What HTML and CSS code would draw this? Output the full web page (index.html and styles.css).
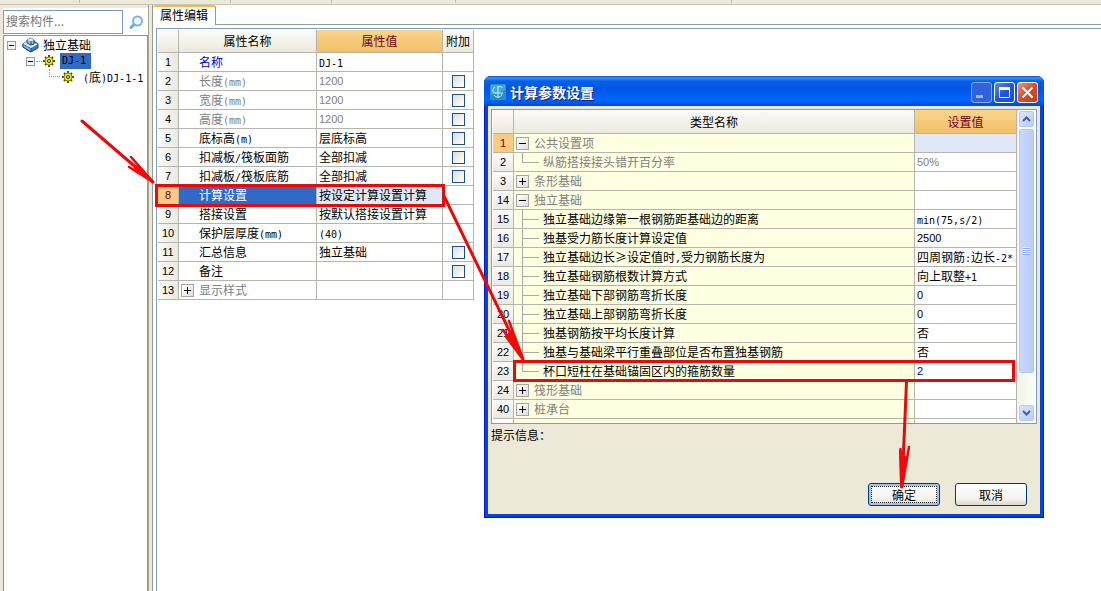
FILE: index.html
```html
<!DOCTYPE html>
<html lang="zh-CN">
<head>
<meta charset="utf-8">
<meta name="viewport" content="width=device-width, initial-scale=1">
<title>属性编辑</title>
<link rel="stylesheet" href="styles.css">
</head>
<body>
<div class="toolbar"><i></i><i></i><i></i><i></i><i></i></div>
<div class="workspace">
  <aside class="sidebar">
    <form class="search">
      <input type="text" class="search-box" placeholder="搜索构件..." aria-label="搜索构件">
      <button type="button" class="search-btn" aria-label="搜索">
        <svg width="16" height="16" viewBox="0 0 16 16"><circle cx="9.500" cy="6" r="4.500" fill="#eef7fe" stroke="#7ab6ea" stroke-width="2"/><path d="M6 9.500L3 12.500" stroke="#6aa8e4" stroke-width="3" stroke-linecap="round"/></svg>
      </button>
    </form>
    <div class="tree">
      <div class="node">
        <button type="button" class="twisty" aria-label="折叠"></button>
        <svg class="root-icon" width="17" height="16" viewBox="0 0 17 16"><path d="M1 7l3-2 4 2 4-3 4 3v4l-7 4-8-5z" fill="#3f7cb8" stroke="#1d4474"/><path d="M1 7l8 4v4l-8-5z" fill="#79b4e0" stroke="#1d4474"/><path d="M1 7l3-2 8 1 4 1-7 4z" fill="#d8effb"/><path d="M5 3l4-2 3 2v4L9 8 5 6z" fill="#8fc4ea" stroke="#1d4474"/><path d="M5 3l4-2 3 2-3 1z" fill="#e8f6fd"/><path d="M9 4v4" stroke="#1d4474"/></svg>
        <span>独立基础</span>
      </div>
      <div class="node level1">
        <button type="button" class="twisty" aria-label="折叠"></button>
        <i class="dots"></i>
        <svg class="gear" width="12" height="12" viewBox="0 0 12 12"><path d="M6 0v12M0 6h12M2 2l8 8M10 2l-8 8" stroke="#4d4800" stroke-width="2"/><circle cx="6" cy="6" r="4" fill="#f6e926" stroke="#8d8200"/><circle cx="6" cy="6" r="1.500" fill="#fff" stroke="#222"/></svg>
        <span class="selected a">DJ-1</span>
      </div>
      <div class="node level2">
        <i class="elbow"></i>
        <svg class="gear" width="12" height="12" viewBox="0 0 12 12"><path d="M6 0v12M0 6h12M2 2l8 8M10 2l-8 8" stroke="#4d4800" stroke-width="2"/><circle cx="6" cy="6" r="4" fill="#f6e926" stroke="#8d8200"/><circle cx="6" cy="6" r="1.500" fill="#fff" stroke="#222"/></svg>
        <span class="leaf"><span class="a">(</span>底<span class="a">)DJ-1-1</span></span>
      </div>
    </div>
  </aside>
  <div class="splitter"></div>
  <main class="editor">
    <div class="tabs"><button type="button" class="tab">属性编辑</button><div class="tab-rest"></div></div>
    <div class="sheet">
      <table class="grid props">
        <colgroup><col class="c-num"><col class="c-name"><col class="c-value"><col class="c-extra"></colgroup>
        <thead><tr><th></th><th>属性名称</th><th class="hot">属性值</th><th>附加</th></tr></thead>
        <tbody>
          <tr><th>1</th><td class="blue">名称</td><td><span class="a">DJ-1</span></td><td></td></tr>
          <tr class="dim"><th>2</th><td>长度<span class="a">(mm)</span></td><td class="n">1200</td><td><input type="checkbox" aria-label="附加 长度"></td></tr>
          <tr class="dim"><th>3</th><td>宽度<span class="a">(mm)</span></td><td class="n">1200</td><td><input type="checkbox" aria-label="附加 宽度"></td></tr>
          <tr class="dim"><th>4</th><td>高度<span class="a">(mm)</span></td><td class="n">1200</td><td><input type="checkbox" aria-label="附加 高度"></td></tr>
          <tr><th>5</th><td>底标高<span class="a">(m)</span></td><td>层底标高</td><td><input type="checkbox" aria-label="附加 底标高"></td></tr>
          <tr><th>6</th><td>扣减板<span class="a">/</span>筏板面筋</td><td>全部扣减</td><td><input type="checkbox" aria-label="附加 面筋"></td></tr>
          <tr><th>7</th><td>扣减板<span class="a">/</span>筏板底筋</td><td>全部扣减</td><td><input type="checkbox" aria-label="附加 底筋"></td></tr>
          <tr class="current"><th>8</th><td>计算设置</td><td>按设定计算设置计算</td><td></td></tr>
          <tr><th>9</th><td>搭接设置</td><td>按默认搭接设置计算</td><td></td></tr>
          <tr><th>10</th><td>保护层厚度<span class="a">(mm)</span></td><td><span class="a">(40)</span></td><td></td></tr>
          <tr><th>11</th><td>汇总信息</td><td>独立基础</td><td><input type="checkbox" aria-label="附加 汇总信息"></td></tr>
          <tr><th>12</th><td>备注</td><td></td><td><input type="checkbox" aria-label="附加 备注"></td></tr>
          <tr class="dim"><th>13</th><td class="group"><div class="line"><button type="button" class="expander plus" aria-label="展开"></button>显示样式</div></td><td></td><td></td></tr>
        </tbody>
      </table>
    </div>
  </main>
</div>

<section class="dialog" role="dialog" aria-labelledby="dialog-title">
  <header class="titlebar">
    <svg width="16" height="16" viewBox="0 0 16 16"><rect width="16" height="16" rx="1" fill="#2a8fc0"/><path d="M1 1h14v5L1 11z" fill="#46a8cf"/><path d="M8 2v12M5 3c-3 2-3 5 0 6h8M4 11c2 3 7 3 8-1M8 3c3-1 4 0 4 1" fill="none" stroke="#c9f1f7"/></svg>
    <h1 id="dialog-title">计算参数设置</h1>
    <button type="button" class="win min" aria-label="最小化"><svg width="19" height="19" viewBox="0 0 19 19"><path d="M4 13.500h7" stroke="#9fb6f2" stroke-width="3"/></svg></button>
    <button type="button" class="win" aria-label="最大化"><svg width="19" height="19" viewBox="0 0 19 19"><path d="M4 5.500h11" stroke="#fff" stroke-width="3"/><path d="M4.500 5v9.500h10V5" fill="none" stroke="#fff"/></svg></button>
    <button type="button" class="win close" aria-label="关闭"><svg width="19" height="19" viewBox="0 0 19 19"><path d="M4.500 4.500l10 10M14.500 4.500l-10 10" stroke="#fff" stroke-width="2"/></svg></button>
  </header>
  <div class="dialog-body">
    <div class="frame">
      <div class="table-area">
        <table class="grid params">
          <colgroup><col class="c-num"><col><col class="c-set"></colgroup>
          <thead><tr><th></th><th>类型名称</th><th class="hot">设置值</th></tr></thead>
          <tbody>
            <tr class="dim active"><th>1</th><td><div class="line"><button type="button" class="expander" aria-label="折叠"></button>公共设置项</div></td><td></td></tr>
            <tr class="dim"><th>2</th><td><div class="line"><i class="branch last"></i>纵筋搭接接头错开百分率</div></td><td class="n">50%</td></tr>
            <tr class="dim"><th>3</th><td><div class="line"><button type="button" class="expander plus" aria-label="展开"></button>条形基础</div></td><td></td></tr>
            <tr class="dim"><th>14</th><td><div class="line"><button type="button" class="expander" aria-label="折叠"></button>独立基础</div></td><td></td></tr>
            <tr><th>15</th><td><div class="line"><i class="branch"></i>独立基础边缘第一根钢筋距基础边的距离</div></td><td><span class="a">min(75,s/2)</span></td></tr>
            <tr><th>16</th><td><div class="line"><i class="branch"></i>独基受力筋长度计算设定值</div></td><td class="n">2500</td></tr>
            <tr><th>17</th><td><div class="line"><i class="branch"></i><span>独立基础边长<span class="ge">≥</span>设定值时<span class="a">,</span>受力钢筋长度为</span></div></td><td>四周钢筋<span class="a">:</span>边长<span class="a">-2*</span></td></tr>
            <tr><th>18</th><td><div class="line"><i class="branch"></i>独立基础钢筋根数计算方式</div></td><td>向上取整<span class="a">+1</span></td></tr>
            <tr><th>19</th><td><div class="line"><i class="branch"></i>独立基础下部钢筋弯折长度</div></td><td class="n">0</td></tr>
            <tr><th>20</th><td><div class="line"><i class="branch"></i>独立基础上部钢筋弯折长度</div></td><td class="n">0</td></tr>
            <tr><th>21</th><td><div class="line"><i class="branch"></i>独基钢筋按平均长度计算</div></td><td>否</td></tr>
            <tr><th>22</th><td><div class="line"><i class="branch"></i>独基与基础梁平行重叠部位是否布置独基钢筋</div></td><td>否</td></tr>
            <tr><th>23</th><td><div class="line"><i class="branch last"></i>杯口短柱在基础锚固区内的箍筋数量</div></td><td class="n navy">2</td></tr>
            <tr class="dim"><th>24</th><td><div class="line"><button type="button" class="expander plus" aria-label="展开"></button>筏形基础</div></td><td></td></tr>
            <tr class="dim"><th>40</th><td><div class="line"><button type="button" class="expander plus" aria-label="展开"></button>桩承台</div></td><td></td></tr>
          </tbody>
        </table>
        <div class="next-row"><i></i><i></i><i></i></div>
      </div>
      <div class="scrollbar">
        <button type="button" class="arrow" aria-label="向上滚动"><svg width="9" height="6" viewBox="0 0 9 6"><path d="M1 5l3.500-3.500L8 5" fill="none" stroke="#4d6185" stroke-width="2"/></svg></button>
        <div class="thumb"><i></i></div>
        <button type="button" class="arrow" aria-label="向下滚动"><svg width="9" height="6" viewBox="0 0 9 6"><path d="M1 1l3.500 3.500L8 1" fill="none" stroke="#4d6185" stroke-width="2"/></svg></button>
      </div>
    </div>
    <p class="hint">提示信息：</p>
    <div class="actions">
      <button type="button" class="btn default"><span>确定</span></button>
      <button type="button" class="btn"><span>取消</span></button>
    </div>
  </div>
</section>

<svg class="marks" width="1101" height="591" viewBox="0 0 1101 591" aria-hidden="true">
  <g fill="none" stroke="#e60a0a" stroke-width="3" stroke-linecap="round">
    <rect x="156.500" y="185.500" width="287" height="20"/>
    <rect x="514.500" y="361.500" width="499" height="19"/>
    <path d="M82 121L153 182M444 196L523 359M906.500 382L902 487"/>
    <path d="M131 157L153 182L129 167M509 321L523 359L503 330M900.500 449L902 487L909 447" stroke-width="2.500"/>
  </g>
  <path d="M138 165L153 182L134 170zM512 330L523 360L506 337zM900 452L901 488L906 458z" fill="#f40808" stroke="#f40808" stroke-width="2"/>
</svg>
</body>
</html>
```

FILE: styles.css
```css
* { box-sizing: border-box; }

body {
  margin: 0;
  min-height: 100vh;
  display: flex;
  flex-direction: column;
  background: #fff;
  color: #000;
  font: 12px/16px "Noto Sans CJK SC", sans-serif;
}

button, input { font: inherit; color: inherit; padding: 0; margin: 0; }
svg { display: block; flex: none; }

.a { font: 10px/12px "DejaVu Sans Mono", monospace; }
.n { font-family: "Liberation Sans", sans-serif; font-size: 11px; }

.toolbar {
  display: grid;
  grid-template-columns: 80px 151px 101px 124px 276px;
  height: 5px;
  flex: none;
  background: #ece9d8;
  border-bottom: 1px solid #c9c5b4;
}
.toolbar i { border-right: 1px solid #c0bba8; height: 3px; }

.workspace { flex: 1; display: flex; }

.sidebar {
  width: 148px;
  flex: none;
  display: flex;
  flex-direction: column;
  padding-left: 3px;
  background: #ece9d8;
}
.search {
  display: flex;
  height: 30px;
  padding-top: 5px;
  background: linear-gradient(#ece9d8 3px, #fdfdfc 3px);
}
.search-box {
  flex: 1;
  min-width: 0;
  height: 24px;
  padding: 0 2px 4px;
  border: 1px solid #7c9bbd;
  outline: 0;
  background: #fff;
}
.search-box::placeholder { color: #777; opacity: 1; }
.search-btn {
  width: 25px;
  display: flex;
  align-items: center;
  justify-content: center;
  border: 0;
  background: transparent;
}
.tree {
  flex: 1;
  padding: 1px 0 0 3px;
  background: #fff;
  border: solid #8797a8;
  border-width: 1px 1px 0;
}
.node { display: flex; align-items: center; height: 16px; white-space: nowrap; }
.twisty {
  width: 9px;
  height: 9px;
  flex: none;
  border: 1px solid #8b9db5;
  background: linear-gradient(#000, #000) center / 5px 1px no-repeat, #f4f3ee;
}
.root-icon { margin: 0 4px 0 6px; }
.level1 { padding-left: 19px; }
.dots { width: 6px; margin: 0 1px; border-top: 1px dotted #999; }
.gear { margin-right: 5px; }
.selected.a { width: 31px; line-height: 16px; padding-left: 2px; background: #316ac5; }
.level2 { padding-left: 42px; }
.elbow {
  width: 11px;
  height: 8px;
  margin-right: 2px;
  align-self: flex-start;
  border: dotted #999;
  border-width: 0 0 1px 1px;
}
.leaf { padding-left: 4px; }

.splitter {
  width: 5px;
  flex: none;
  background: #e9ead9;
  border-left: 1px solid #a8a38f;
  border-right: 1px solid #919b9c;
}

.editor { flex: 1; min-width: 0; display: flex; flex-direction: column; }
.tabs { display: flex; height: 20px; }
.tab {
  width: 63px;
  padding-bottom: 3px;
  border: solid #919b9c;
  border-width: 2px 1px 0 0;
  border-top-color: #f3b944;
  border-radius: 3px 3px 0 0;
  background: #fff;
  line-height: 15px;
}
.tab-rest { flex: 1; border-bottom: 1px solid #919b9c; }
.sheet {
  flex: 1;
  margin: 3px 0 0 3px;
  padding: 1px 0 0 1px;
  border: solid #7f9db9;
  border-width: 1px 0 0 1px;
}

.grid { border-collapse: separate; border-spacing: 0; table-layout: fixed; }
.grid th, .grid td {
  padding: 0;
  height: 19px;
  line-height: 16px;
  border: solid #b5b5ae;
  border-width: 0 1px 1px 0;
  font-weight: 400;
  text-align: left;
  white-space: nowrap;
  overflow: hidden;
}
.grid thead th {
  height: 23px;
  text-align: center;
  background: linear-gradient(#fbfbf9, #ebe9dd);
}
.grid thead .hot { background: linear-gradient(#fad48c, #f2c06a); color: #700020; }
.grid tbody th {
  font-family: "Liberation Sans", sans-serif;
  font-size: 11px;
  text-align: center;
  background: linear-gradient(90deg, #fbfbf9, #ebe9dd);
}
.grid .dim td { color: #808080; }
.c-num { width: 21px; }
.c-name { width: 138px; }
.c-value { width: 126px; }
.c-extra { width: 31px; }
.c-set { width: 102px; }

.props { width: 316px; }
.props td:nth-child(2) { padding-left: 20px; }
.props td.group { padding-left: 2px; }
.props td:nth-child(3) { padding-left: 2px; }
.props .blue { color: #0000d8; }
.props .current th { background: #fccb83; color: #700020; }
.props .current td:nth-child(2) { background: #316ac5; color: #fff; }
.props .current td:nth-child(3) { background: #dfe8f6; }
.props input {
  display: block;
  width: 13px;
  height: 13px;
  margin: 1px auto 0;
  appearance: none;
  border: 1px solid #1c5180;
  background: linear-gradient(135deg, #dcdcd7, #fff);
}

.line { display: flex; align-items: center; height: 18px; }
.expander {
  width: 13px;
  height: 13px;
  flex: none;
  margin-right: 5px;
  border: 1px solid #a5a59d;
  background: linear-gradient(#000, #000) center / 7px 1px no-repeat, linear-gradient(135deg, #fff, #dedede);
}
.expander.plus {
  background: linear-gradient(#000, #000) center / 7px 1px no-repeat, linear-gradient(#000, #000) center / 1px 7px no-repeat, linear-gradient(135deg, #fff, #dedede);
}
.branch {
  width: 17px;
  height: 18px;
  flex: none;
  margin: 0 4px 0 6px;
  background: linear-gradient(#aaa, #aaa) left / 1px 100% no-repeat, linear-gradient(#aaa, #aaa) center / 100% 1px no-repeat;
}
.branch.last { background-size: 1px 50%, 100% 1px; background-position: left top, center; }

.dialog {
  position: absolute;
  left: 484px;
  top: 76px;
  width: 560px;
  padding: 0 4px 4px;
  border-radius: 7px 7px 0 0;
  background: #0842d6;
  box-shadow: inset 1px 0 #0019cf, inset -1px -1px #001ea0;
}
.titlebar {
  display: flex;
  align-items: center;
  gap: 2px;
  height: 30px;
  margin: 0 -4px;
  padding: 2px 6px 0;
  border-radius: 7px 7px 0 0;
  background: linear-gradient(#0b4fd0, #3c93fd 2px, #0560e8 5px, #0055e5 13px, #0066fd 24px, #0048cc);
}
.titlebar h1 {
  flex: 1;
  margin: 0 0 0 2px;
  color: #fff;
  font-size: 14px;
  line-height: 20px;
  font-weight: 700;
  text-shadow: 1px 1px #0f1f7a;
}
.win {
  width: 21px;
  height: 21px;
  border: 1px solid #fff;
  border-radius: 3px;
  background: linear-gradient(135deg, #5f8df2, #2153dc 50%, #1a4fd8);
}
.win.min { border-color: #8ba9ef; background: #2f62dc; }
.win.close { background: linear-gradient(135deg, #f0957c, #dc4b27 50%, #c93c17); }

.dialog-body { padding: 3px 3px 8px; background: #ece9d8; }
.frame {
  display: flex;
  border: 1px solid #7f9db9;
  background: #fff;
}
.table-area { flex: 1; min-width: 0; padding-left: 1px; }
.params { width: 100%; }
.params thead th { height: 24px; }
.params tbody th { background: linear-gradient(#fbfbfa, #ebe9e2); }
.params td:nth-child(2) { padding-left: 2px; background: #ffffe1; }
.params td:nth-child(3) { padding-left: 2px; }
.params .active th { background: #fccb83; color: #700020; }
.params .active td:nth-child(3) { background: #dfe8f6; }
.params .navy { color: #00008b; }
.ge { display: inline-block; width: 12px; }
.next-row { display: grid; grid-template-columns: 21px 1fr 102px; height: 4px; }
.next-row i { border-right: 1px solid #b5b5ae; }
.next-row i:nth-child(2) { background: #ffffe1; }

.scrollbar {
  width: 19px;
  display: flex;
  flex-direction: column;
  padding: 0 1px 1px;
  background: linear-gradient(90deg, #f1f0ea, #fefefb);
}
.arrow {
  height: 18px;
  flex: none;
  display: flex;
  align-items: center;
  justify-content: center;
  border: 1px solid #fff;
  border-radius: 3px;
  background: linear-gradient(135deg, #dce7fe, #b6cafa);
  box-shadow: inset 0 0 0 1px #b5c8f3;
}
.thumb {
  flex: 0 0 246px;
  margin-bottom: auto;
  display: flex;
  align-items: center;
  justify-content: center;
  border: 1px solid #fff;
  border-radius: 3px;
  background: linear-gradient(90deg, #cad8fd, #b9cbf9);
  box-shadow: inset 0 0 0 1px #b3c5f3;
}
.thumb i {
  width: 7px;
  height: 8px;
  background: repeating-linear-gradient(#eef4fe 0 1px, #8cb0f8 1px 2px);
}

.hint { margin: 2px 0 0; line-height: 18px; }
.actions { display: flex; justify-content: flex-end; gap: 15px; margin: 39px 10px 0 0; }
.btn {
  width: 72px;
  height: 23px;
  padding: 2px;
  border: 1px solid #003c74;
  border-radius: 3px;
  background: linear-gradient(#fff, #f4f3ee 70%, #dcd8cc);
}
.btn span { display: block; line-height: 15px; border: 1px solid transparent; }
.btn.default { box-shadow: inset 0 0 0 2px #a5c1ee; }
.btn.default span { border: 1px dotted #222; }

.marks { position: absolute; left: 0; top: 0; pointer-events: none; }
```
